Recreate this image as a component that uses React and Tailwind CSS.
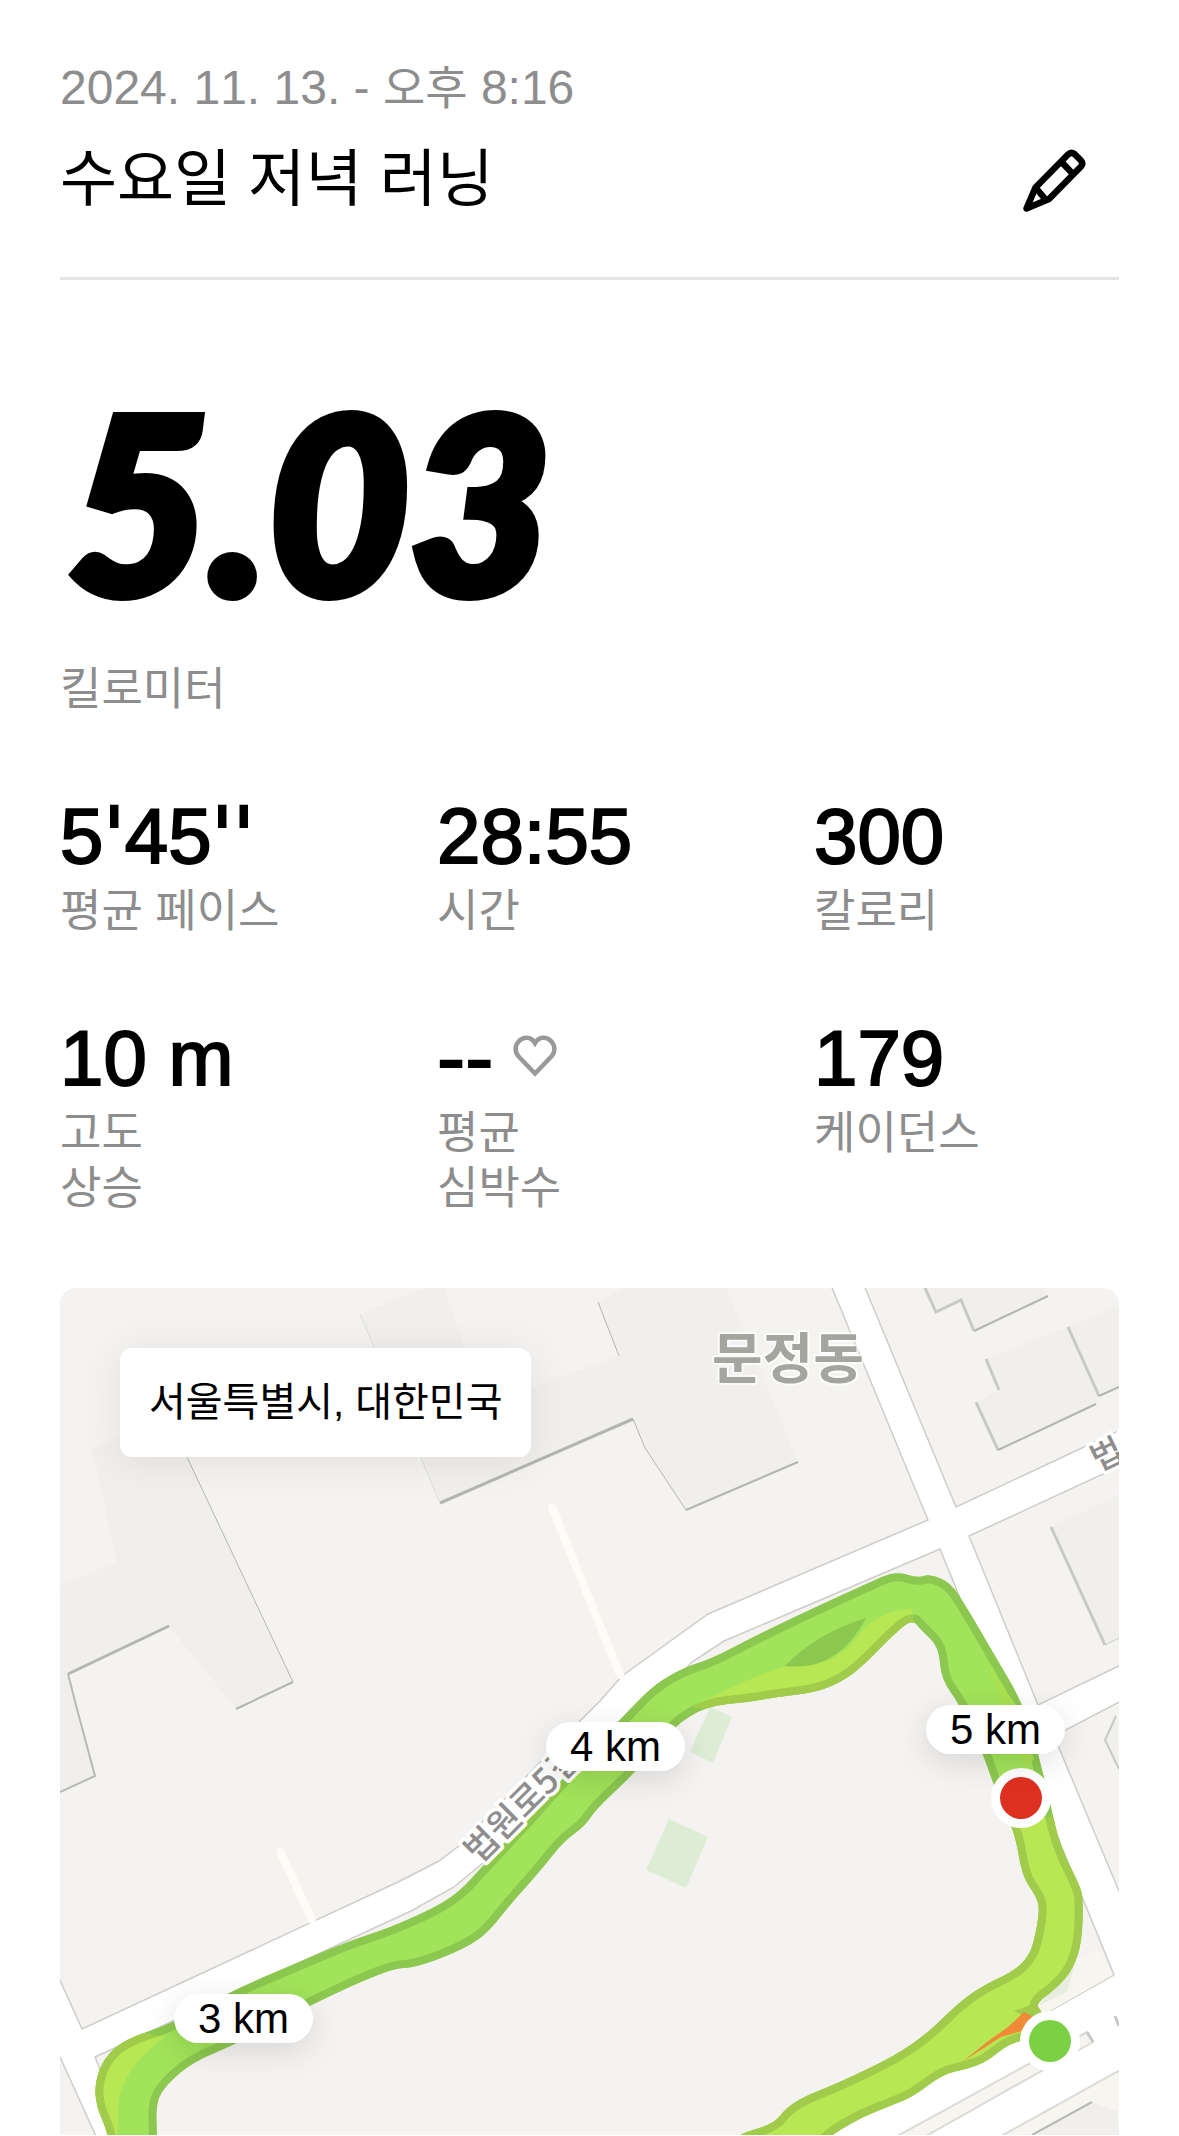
// a mark is a run of punctuation, set in a face with wider spacing
const STATS = [
  { parts: ["5", { mark: "'" }, "45", { mark: "''" }], label: ["평균 페이스"] },
  { parts: ["28:55"], label: ["시간"] },
  { parts: ["300"], label: ["칼로리"] },
  { parts: ["10 m"], label: ["고도", "상승"] },
  { parts: [{ mark: "--" }], label: ["평균", "심박수"], heart: true },
  { parts: ["179"], label: ["케이던스"] },
];

// city blocks, everything between them is road
const BLOCKS = [
  "50,1279 828,1279 928,1521 708,1615 622,1677 600,1702 579,1723 460,1846 439,1862 398,1883 82,2030 50,1959",
  "861,1279 956,1508 1129,1427 1129,1279",
  "969,1537 1129,1463 1129,1662 1038,1706",
  "1129,1698 1054,1737 1129,1916",
  "940,1550 724,1642 692,1663 560,1800 454,1888 411,1912 95,2058 130,2146 812,2146 1050,2012 1114,1976",
  "50,2036 100,2146 50,2146",
];

const STRIPS = [
  "881,2146 1087,2033 1093,2043 910,2146",
  "1129,2066 985,2146 1129,2146",
];

const BUILDINGS = [
  "360,1315 425,1289 444,1289 485,1405 619,1357 598,1303 623,1289 726,1289 798,1463 686,1511 645,1449 633,1420 440,1504",
  "92,1450 180,1410 187,1458 293,1683 236,1710 169,1627 68,1675 77,1710 95,1777 60,1793 60,1587 117,1562",
  "925,1289 936,1313 961,1301 974,1332 1048,1297 1044,1289",
  "986,1360 999,1391 976,1403 998,1451 1096,1405 1099,1397 1119,1388 1119,1307 1068,1328",
  "1051,1528 1105,1646 1119,1639 1119,1496",
  "1116,1717 1105,1741 1119,1770",
  "1032,2136 1092,2103 1117,2112 1119,2136",
];

const WALLS = [
  { points: "440,1504 633,1420", width: 3, color: "#b4b4b2" },
  { points: "633,1420 645,1449 686,1511", width: 1, color: "#b4b4b2" },
  { points: "686,1511 798,1463", width: 2, color: "#b4b4b2" },
  { points: "598,1303 619,1357", width: 1, color: "#b4b4b2" },
  { points: "360,1315 440,1504", width: 1, color: "#dededc" },
  { points: "187,1458 293,1683", width: 1, color: "#b4b4b2" },
  { points: "293,1683 236,1710", width: 2, color: "#b4b4b2" },
  { points: "169,1627 68,1675", width: 3, color: "#b4b4b2" },
  { points: "68,1675 77,1710 95,1777 60,1793", width: 2, color: "#b8b8b6" },
  { points: "925,1289 936,1313 961,1301 974,1332", width: 3, color: "#c8c8c6" },
  { points: "974,1332 1048,1297", width: 2, color: "#b4b4b2" },
  { points: "986,1360 999,1391", width: 3, color: "#c8c8c6" },
  { points: "976,1403 998,1451", width: 3, color: "#c8c8c6" },
  { points: "998,1451 1096,1405", width: 2, color: "#b4b4b2" },
  { points: "1068,1328 1099,1397", width: 3, color: "#c8c8c6" },
  { points: "1099,1397 1119,1388", width: 2, color: "#b4b4b2" },
  { points: "1051,1528 1105,1646", width: 3, color: "#c8c8c6" },
  { points: "1105,1646 1119,1639", width: 1, color: "#c8c8c6" },
  { points: "1116,1717 1105,1741 1119,1770", width: 2, color: "#c8c8c6" },
  { points: "1032,2136 1092,2103", width: 2, color: "#b8b8b6" },
  { points: "1115,2017 1119,2027", width: 3, color: "#c8c8c6" },
  { points: "1087,2033 1093,2043", width: 3, color: "#c8c8c6" },
];

const OUTER = [
  [109, 2150], [109, 2136], [96, 2107], [95, 2083], [104, 2059], [125, 2040], [174, 2024], [229, 1993],
  [294, 1965], [349, 1942], [389, 1929], [436, 1908], [460, 1892], [480, 1870], [505, 1843], [527, 1820],
  [560, 1782], [600, 1742], [631, 1709], [655, 1685], [685, 1668], [711, 1660], [755, 1637], [807, 1612],
  [866, 1585], [895, 1572], [918, 1579], [929, 1575], [950, 1583], [966, 1607], [991, 1650], [1024, 1706],
  [1039, 1757], [1051, 1808], [1060, 1847], [1080, 1887], [1083, 1900], [1082, 1943], [1073, 1970],
  [1058, 1988], [1034, 2006], [1044, 2014], [1040, 2036], [1020, 2042], [1006, 2047], [986, 2063],
  [967, 2070], [943, 2075], [914, 2097], [895, 2105], [862, 2118], [831, 2136], [820, 2150],
];

const INNER = [
  [157, 2150], [157, 2136], [156, 2103], [167, 2085], [193, 2063], [236, 2045], [309, 2007], [360, 1983],
  [396, 1969], [411, 1969], [440, 1960], [473, 1945], [491, 1930], [509, 1907], [542, 1870], [563, 1843],
  [585, 1827], [597, 1809], [637, 1772], [674, 1727], [707, 1707], [748, 1703], [777, 1698], [818, 1693],
  [847, 1680], [870, 1660], [892, 1637], [912, 1620], [921, 1631], [939, 1648], [941, 1680], [960, 1706],
  [984, 1757], [993, 1785], [1015, 1833], [1022, 1877], [1036, 1897], [1040, 1910], [1034, 1943],
  [1028, 1958], [1014, 1972], [980, 1988], [955, 2007], [929, 2033], [895, 2057], [836, 2085],
  [803, 2098], [785, 2110], [774, 2125], [735, 2136], [720, 2150],
];

// rounds the corners by running quadratic curves through the midpoints
const smooth = (points) =>
  points
    .slice(1)
    .map(([x, y], i) => {
      const next = points[i + 2] || [x, y];
      return `Q${x} ${y} ${(x + next[0]) / 2} ${(y + next[1]) / 2}`;
    })
    .join(" ");

const ROUTE = `M${OUTER[0].join(" ")} ${smooth(OUTER)} L720 2150 ${smooth([...INNER].reverse())} Z`;

const PencilIcon = () => (
  <svg viewBox="0 0 64 64" className="h-16 w-16" fill="none" stroke="currentColor" strokeWidth="6.5" strokeLinejoin="round" aria-hidden="true">
    <path d="M3.5 60.5 L12.5 39.5 L45 6.5 Q48 3.5 51.5 6 L58 12.5 Q60.5 15.5 58 18.5 L26 51 Z" />
    <path d="M38 13.5 L50 26 M12.5 39.5 L23 52" />
  </svg>
);

const HeartIcon = () => (
  <svg viewBox="0 0 44 42" className="mb-1 h-[42px] w-11" fill="none" stroke="#999999" strokeWidth="4.5" aria-hidden="true">
    <path d="M22 38.5 L5.6 21.5 A11 11 0 0 1 5.6 6.5 C10 1.2 18 1.2 22 8 C26 1.2 34 1.2 38.4 6.5 A11 11 0 0 1 38.4 21.5 Z" />
  </svg>
);

const Stat = ({ parts, label, heart }) => (
  <div>
    <dd className="mb-[5px] flex h-[86px] items-center gap-5 text-[78px] leading-[86px] [-webkit-text-stroke:2px_black]">
      <span>
        {parts.map((part, i) =>
          part.mark ? (
            <span key={i} className="font-['DejaVu_Sans',sans-serif]">{part.mark}</span>
          ) : (
            part
          )
        )}
      </span>
      {heart && <HeartIcon />}
    </dd>
    <dt className="text-[45px] leading-[55px] text-[#8d8d8d]">
      {label.map((line) => (
        <span key={line} className="block">{line}</span>
      ))}
    </dt>
  </div>
);

const KmPin = ({ className, children }) => (
  <span
    className={`absolute flex h-[49px] w-[139px] items-center justify-center rounded-full bg-white text-[42px] leading-none shadow-[0_8px_32px_rgba(0,0,0,0.12)] ${className}`}
  >
    {children}
  </span>
);

const RouteFill = ({ fill, edge }) => (
  <g clipPath="url(#route)">
    <path d={ROUTE} fill={fill} stroke={edge} strokeWidth="16" />
  </g>
);

const MapDrawing = () => (
  <svg viewBox="60 1289 1059 847" className="block w-full" role="img" aria-label="러닝 경로">
    <defs>
      <clipPath id="route">
        <path d={ROUTE} />
      </clipPath>
      <clipPath id="slower">
        <path d="M940 1818 L1119 1818 L1119 2136 L600 2136 Z" />
        <path d="M60 2020 L165 2038 Q120 2070 118 2110 L118 2136 L60 2136 Z" />
        <path d="M912 1610 Q880 1612 862 1632 Q835 1672 785 1667 Q745 1680 692 1708 L860 1730 L914 1630 Z" />
      </clipPath>
    </defs>
    <rect x="60" y="1289" width="1059" height="847" fill="#ffffff" />
    {BLOCKS.map((points) => (
      <polygon key={points} points={points} fill="#f4f3f1" stroke="#cfcdc9" strokeWidth="1.5" />
    ))}
    {STRIPS.map((points) => (
      <polygon key={points} points={points} fill="#f6f5ef" stroke="#dcdad6" strokeWidth="2" />
    ))}
    <polygon points="1098,1950 1113,1976 1036,2020 1050,1975" fill="#f6f5ee" />
    <polygon points="1074,1968 1067,1993 1040,2006 1056,1980" fill="#e7eedf" />
    {BUILDINGS.map((points) => (
      <polygon key={points} points={points} fill="#f0efee" />
    ))}
    {WALLS.map(({ points, width, color }) => (
      <polyline key={points} points={points} fill="none" stroke={color} strokeWidth={width} />
    ))}
    <path d="M552 1508 L620 1676 M280 1852 L312 1921" stroke="#fdfcf7" strokeWidth="8" strokeLinecap="round" />
    <polygon points="710,1708 732,1718 713,1764 690,1753" fill="#ddedd5" />
    <polygon points="669,1820 708,1838 686,1889 646,1871" fill="#ddedd5" />

    <RouteFill fill="#a1e35a" edge="#8cc74f" />
    <g clipPath="url(#slower)">
      <RouteFill fill="#b7e854" edge="#a1cb4a" />
    </g>
    <path d="M866 1619 Q815 1635 785 1667 Q838 1673 866 1619 Z" fill="#8cc74f" />
    <path d="M985 1662 L1016 1706 L1034 1760 L1026 1770 Z" fill="#a9e150" />
    <path d="M1014 2012 L1036 2004 L1042 2014 L1030 2020 Z" fill="#a1cb4a" />
    <path d="M1024 2013 L1033 2018 L1022 2032 L1001 2038 L962 2063 L991 2040 L1008 2028 Z" fill="#ef8a36" />

    <g fontFamily="'Noto Sans CJK KR', sans-serif" fontWeight="700" stroke="#ffffff" strokeLinejoin="round" paintOrder="stroke">
      <text x="712" y="1379" fontSize="55" fill="#a5a5a0" strokeWidth="4" strokeOpacity="0.7">문정동</text>
      <text transform="translate(479 1866) rotate(-45)" fontSize="35" fontWeight="500" fill="#8e8e8e" strokeWidth="7">법원로5길</text>
      <text transform="translate(1098 1473) rotate(-26)" fontSize="34" fontWeight="500" fill="#8e8e8e" strokeWidth="7">법원</text>
    </g>

    <circle cx="1021" cy="1799" r="30" fill="#ffffff" />
    <circle cx="1021" cy="1799" r="21" fill="#dd3021" />
    <circle cx="1050" cy="2042" r="30" fill="#ffffff" />
    <circle cx="1050" cy="2042" r="21" fill="#79d143" />
  </svg>
);

const App = () => (
  <main className="min-h-screen overflow-hidden bg-white px-[60px] pt-[60px] font-['Liberation_Sans','Noto_Sans_CJK_KR',sans-serif] text-black [font-kerning:none]">
    <header className="border-b-[3px] border-[#e5e5e5] pb-[55px]">
      <p className="text-[48px] leading-[56px] text-[#8d8d8d]">
        2024. 11. 13. - <span className="text-[46px]">오후</span> 8:16
      </p>
      <div className="mt-[22px] flex items-center justify-between pr-8">
        <h1 className="text-[62px] font-normal leading-[84px]">수요일 저녁 러닝</h1>
        <button type="button" aria-label="제목 수정">
          <PencilIcon />
        </button>
      </div>
    </header>

    <section className="pt-[104px]">
      <p className="pl-2 font-['Lato',sans-serif] text-[244px] font-black italic leading-[232px] [-webkit-text-stroke:10px_black]">5.03</p>
      <p className="mt-[46px] text-[45px] leading-[55px] text-[#8d8d8d]">킬로미터</p>
      <dl className="mt-[76px] grid grid-cols-3 gap-x-[72px] gap-y-[76px]">
        {STATS.map((stat) => (
          <Stat key={stat.label.join(" ")} {...stat} />
        ))}
      </dl>
    </section>

    <section className="relative mt-[72px] overflow-hidden rounded-t-2xl">
      <MapDrawing />
      <p className="absolute left-[60px] top-[60px] rounded-xl bg-white px-[29px] text-[40px] leading-[109px] shadow-[0_4px_40px_rgba(0,0,0,0.08)]">
        서울특별시, 대한민국
      </p>
      <KmPin className="left-[486px] top-[434px]">4 km</KmPin>
      <KmPin className="left-[866px] top-[417px]">5 km</KmPin>
      <KmPin className="left-[114px] top-[706px]">3 km</KmPin>
    </section>
  </main>
);

export default App;
